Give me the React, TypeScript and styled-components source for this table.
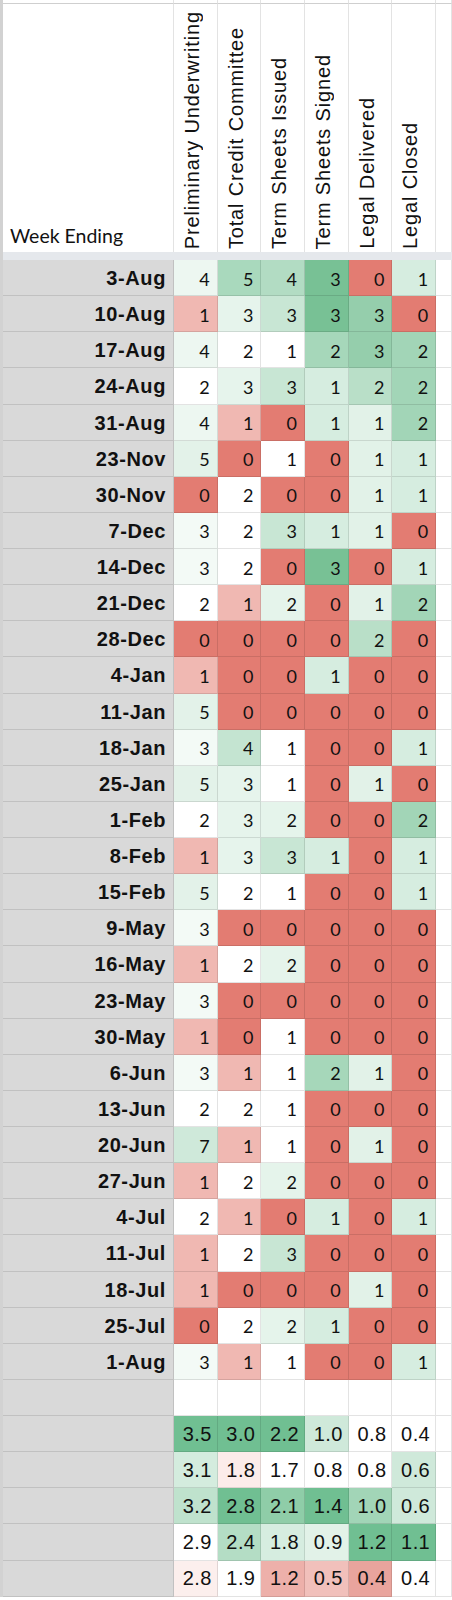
import React from "react";
import styled, { createGlobalStyle } from "styled-components";

const RED = "#e37c72";
const PINK = "#f0b8b2";

// value -> fill, one map per column (colour scale as rendered in the sheet)
const scales: Record<number, string>[] = [
  { 0: RED, 1: PINK, 2: "#ffffff", 3: "#f3faf6", 4: "#edf7f1", 5: "#e3f2e9", 7: "#cfe9da" },
  { 0: RED, 1: PINK, 2: "#ffffff", 3: "#e6f4ec", 4: "#c4e4d1", 5: "#a9d9bd" },
  { 0: RED, 1: "#ffffff", 2: "#e5f4eb", 3: "#c8e6d4", 4: "#b2dcc3" },
  { 0: RED, 1: "#d6ede0", 2: "#a6d7ba", 3: "#78c195" },
  { 0: RED, 1: "#e2f2e8", 2: "#b9dfc8", 3: "#95ceac" },
  { 0: RED, 1: "#d6ede0", 2: "#a2d5b7" },
];

const headers = [
  "Preliminary Underwriting",
  "Total Credit Committee",
  "Term Sheets Issued",
  "Term Sheets Signed",
  "Legal Delivered",
  "Legal Closed",
];

const weeks: [string, number[]][] = [
  ["3-Aug", [4, 5, 4, 3, 0, 1]],
  ["10-Aug", [1, 3, 3, 3, 3, 0]],
  ["17-Aug", [4, 2, 1, 2, 3, 2]],
  ["24-Aug", [2, 3, 3, 1, 2, 2]],
  ["31-Aug", [4, 1, 0, 1, 1, 2]],
  ["23-Nov", [5, 0, 1, 0, 1, 1]],
  ["30-Nov", [0, 2, 0, 0, 1, 1]],
  ["7-Dec", [3, 2, 3, 1, 1, 0]],
  ["14-Dec", [3, 2, 0, 3, 0, 1]],
  ["21-Dec", [2, 1, 2, 0, 1, 2]],
  ["28-Dec", [0, 0, 0, 0, 2, 0]],
  ["4-Jan", [1, 0, 0, 1, 0, 0]],
  ["11-Jan", [5, 0, 0, 0, 0, 0]],
  ["18-Jan", [3, 4, 1, 0, 0, 1]],
  ["25-Jan", [5, 3, 1, 0, 1, 0]],
  ["1-Feb", [2, 3, 2, 0, 0, 2]],
  ["8-Feb", [1, 3, 3, 1, 0, 1]],
  ["15-Feb", [5, 2, 1, 0, 0, 1]],
  ["9-May", [3, 0, 0, 0, 0, 0]],
  ["16-May", [1, 2, 2, 0, 0, 0]],
  ["23-May", [3, 0, 0, 0, 0, 0]],
  ["30-May", [1, 0, 1, 0, 0, 0]],
  ["6-Jun", [3, 1, 1, 2, 1, 0]],
  ["13-Jun", [2, 2, 1, 0, 0, 0]],
  ["20-Jun", [7, 1, 1, 0, 1, 0]],
  ["27-Jun", [1, 2, 2, 0, 0, 0]],
  ["4-Jul", [2, 1, 0, 1, 0, 1]],
  ["11-Jul", [1, 2, 3, 0, 0, 0]],
  ["18-Jul", [1, 0, 0, 0, 1, 0]],
  ["25-Jul", [0, 2, 2, 1, 0, 0]],
  ["1-Aug", [3, 1, 1, 0, 0, 1]],
];

const DG = "#70bf92";
const stats: [string, string][][] = [
  [["3.5", DG], ["3.0", DG], ["2.2", DG], ["1.0", "#cfe9da"], ["0.8", "#fff"], ["0.4", "#fff"]],
  [["3.1", "#d4ecde"], ["1.8", "#fcecea"], ["1.7", "#fff"], ["0.8", "#fff"], ["0.8", "#fff"], ["0.6", "#cfe9da"]],
  [["3.2", "#bfe2cd"], ["2.8", DG], ["2.1", "#8fcda8"], ["1.4", DG], ["1.0", "#a2d5b7"], ["0.6", "#cfe9da"]],
  [["2.9", "#fff"], ["2.4", "#b4ddc5"], ["1.8", "#d6ede0"], ["0.9", "#e2f2e8"], ["1.2", DG], ["1.1", DG]],
  [["2.8", "#fcefed"], ["1.9", "#fff"], ["1.2", "#edb0aa"], ["0.5", "#f1c0bb"], ["0.4", "#e9a49d"], ["0.4", "#fff"]],
];

const GlobalStyle = createGlobalStyle`
  body {
    margin: 0;
    background: #ffffff;
  }
`;

const Sheet = styled.div`
  width: 452px;
  border-left: 3px solid #d2d2d2;
  box-sizing: border-box;
  overflow: hidden;
`;

const Row = styled.div<{ $h: number }>`
  display: grid;
  grid-template-columns: 171px repeat(6, 43.7px) 1fr;
  height: ${(p) => p.$h}px;
`;

const Line = "1px solid rgba(0, 0, 0, 0.11)";

const Cell = styled.div<{ $bg?: string }>`
  box-sizing: border-box;
  background: ${(p) => p.$bg || "#ffffff"};
  border-right: ${Line};
  border-bottom: ${Line};
  display: flex;
  align-items: center;
  justify-content: flex-end;
  color: #111;
  white-space: nowrap;
`;

const TopCell = styled(Cell)`
  border-bottom: 1px solid #cfcfcf;
`;

const DateCell = styled(Cell)`
  background: #d9d9d9;
  padding: 2px 7px 0 0;
  font-family: "Liberation Sans", Arial, sans-serif;
  font-weight: 700;
  font-size: 20px;
  letter-spacing: 0.6px;
`;

const NumCell = styled(Cell)`
  padding: 2px 7px 0 0;
  font-family: Lato, "Open Sans", sans-serif;
  font-size: 18px;
`;

const StatCell = styled(Cell)`
  padding: 1px 5px 0 0;
  font-family: "Liberation Sans", Arial, sans-serif;
  font-size: 20px;
  letter-spacing: 0.4px;
`;

const CornerCell = styled(Cell)`
  border-bottom: none;
  align-items: flex-end;
  justify-content: flex-start;
  padding: 0 0 5px 7px;
  font-family: Lato, "Open Sans", sans-serif;
  font-size: 19.5px;
`;

const HeadCell = styled(Cell)`
  border-bottom: none;
  align-items: flex-end;
  justify-content: center;
  padding: 0 6px 3px 0;
`;

const VerticalLabel = styled.span`
  writing-mode: vertical-rl;
  transform: rotate(180deg);
  font-family: "Liberation Sans", Arial, sans-serif;
  font-size: 20px;
  letter-spacing: 0.85px;
  color: #111;
`;

const FreezeBar = styled.div`
  height: 8px;
  background: #e5e8ec;
`;

const ROW_H = 36.14;

export default function App() {
  return (
    <>
      <GlobalStyle />
      <Sheet>
        <Row $h={4}>
          {Array.from({ length: 8 }).map((_, i) => (
            <TopCell key={i} />
          ))}
        </Row>
        <Row $h={248}>
          <CornerCell>Week Ending</CornerCell>
          {headers.map((h) => (
            <HeadCell key={h}>
              <VerticalLabel>{h}</VerticalLabel>
            </HeadCell>
          ))}
          <HeadCell />
        </Row>
        <FreezeBar />
        {weeks.map(([week, vals]) => (
          <Row $h={ROW_H} key={week}>
            <DateCell>{week}</DateCell>
            {vals.map((v, i) => (
              <NumCell key={i} $bg={scales[i][v]}>
                {v}
              </NumCell>
            ))}
            <Cell />
          </Row>
        ))}
        <Row $h={ROW_H}>
          <DateCell />
          {headers.map((h) => (
            <Cell key={h} />
          ))}
          <Cell />
        </Row>
        {stats.map((row, r) => (
          <Row $h={ROW_H} key={r}>
            <DateCell />
            {row.map(([v, bg], i) => (
              <StatCell key={i} $bg={bg}>
                {v}
              </StatCell>
            ))}
            <Cell />
          </Row>
        ))}
      </Sheet>
    </>
  );
}
